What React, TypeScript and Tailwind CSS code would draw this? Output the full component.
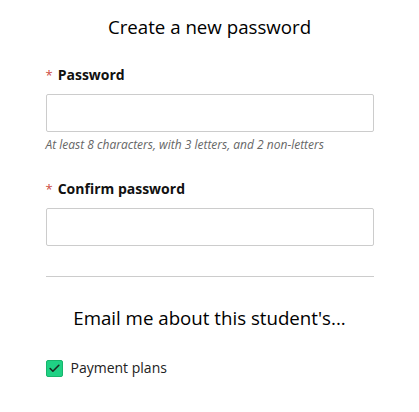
import { Check } from 'lucide-react';

function Field({ label, hint }: { label: string; hint?: string }) {
  return (
    <div className="flex flex-col">
      <label className="flex items-center gap-[5px] text-[14px] font-bold leading-5 text-[#111]">
        <span className="text-[13px] font-normal text-[#cc4b3f]">*</span>
        {label}
      </label>
      <input
        type="password"
        className="mt-[9px] h-[38px] w-full rounded-[2px] border border-[#cccccc] bg-white px-2 outline-none"
      />
      {hint && (
        <p className="mt-[5px] text-[12px] italic leading-4 text-[#666]">{hint}</p>
      )}
    </div>
  );
}

export default function App() {
  return (
    <div className="min-h-screen bg-white font-['Open_Sans',sans-serif] text-[#111]">
      <div className="mx-auto flex w-[328px] flex-col pt-[15px]">
        <h1 className="text-center text-[18.7px] font-normal leading-6 text-black">Create a new password</h1>

        <div className="mt-[26px]">
          <Field label="Password" hint="At least 8 characters, with 3 letters, and 2 non-letters" />
        </div>

        <div className="mt-[26px]">
          <Field label="Confirm password" />
        </div>

        <hr className="mt-[30px] border-t border-[#cccccc]" />

        <h2 className="mt-[29px] text-center text-[18.7px] font-normal leading-6 text-black">
          Email me about this student's...
        </h2>

        <label className="mt-[28px] flex items-center gap-[8px] text-[14px] leading-5 text-[#222]">
          <span className="flex h-[17px] w-[17px] items-center justify-center rounded-[2px] border border-[#18b56c] bg-[#1fd184]">
            <Check className="h-[13px] w-[13px] text-[#1a2a22]" strokeWidth={3} />
          </span>
          Payment plans
        </label>
      </div>
    </div>
  );
}
